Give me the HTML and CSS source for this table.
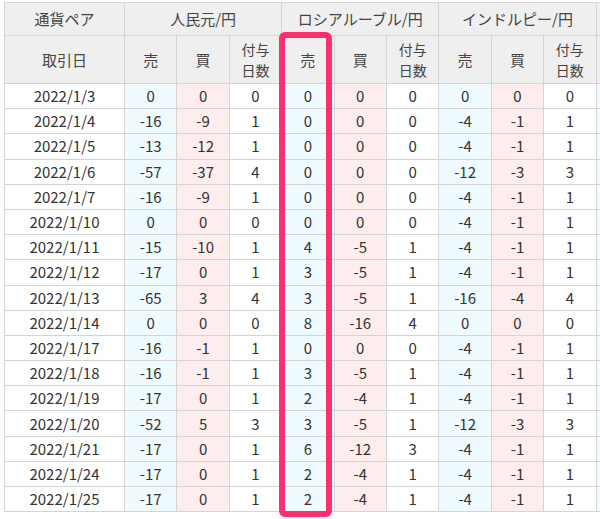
FILE: index.html
```html
<!DOCTYPE html>
<html lang="ja">
<head>
<meta charset="utf-8">
<title>通貨ペア</title>
<link rel="stylesheet" href="styles.css">
</head>
<body>
<div class="wrap">
  <table class="rates">
    <colgroup>
      <col class="c-date">
      <col class="c-num"><col class="c-num"><col class="c-num">
      <col class="c-num"><col class="c-num"><col class="c-num">
      <col class="c-num"><col class="c-num"><col class="c-num">
      <col class="c-num">
    </colgroup>
    <thead>
      <tr class="pair">
        <th>通貨ペア</th>
        <th colspan="3">人民元/円</th>
        <th colspan="3">ロシアルーブル/円</th>
        <th colspan="3">インドルピー/円</th>
        <th></th>
      </tr>
      <tr class="sub">
        <th>取引日</th>
        <th>売</th><th>買</th><th><span class="two">付与<br>日数</span></th>
        <th>売</th><th>買</th><th><span class="two">付与<br>日数</span></th>
        <th>売</th><th>買</th><th><span class="two">付与<br>日数</span></th>
        <th></th>
      </tr>
    </thead>
    <tbody id="rows"></tbody>
  </table>
  <div class="highlight"></div>
</div>
<script src="script.js"></script>
</body>
</html>
```

FILE: script.js
```js
const data = [
  ["2022/1/3", 0, 0, 0, 0, 0, 0, 0, 0, 0],
  ["2022/1/4", -16, -9, 1, 0, 0, 0, -4, -1, 1],
  ["2022/1/5", -13, -12, 1, 0, 0, 0, -4, -1, 1],
  ["2022/1/6", -57, -37, 4, 0, 0, 0, -12, -3, 3],
  ["2022/1/7", -16, -9, 1, 0, 0, 0, -4, -1, 1],
  ["2022/1/10", 0, 0, 0, 0, 0, 0, -4, -1, 1],
  ["2022/1/11", -15, -10, 1, 4, -5, 1, -4, -1, 1],
  ["2022/1/12", -17, 0, 1, 3, -5, 1, -4, -1, 1],
  ["2022/1/13", -65, 3, 4, 3, -5, 1, -16, -4, 4],
  ["2022/1/14", 0, 0, 0, 8, -16, 4, 0, 0, 0],
  ["2022/1/17", -16, -1, 1, 0, 0, 0, -4, -1, 1],
  ["2022/1/18", -16, -1, 1, 3, -5, 1, -4, -1, 1],
  ["2022/1/19", -17, 0, 1, 2, -4, 1, -4, -1, 1],
  ["2022/1/20", -52, 5, 3, 3, -5, 1, -12, -3, 3],
  ["2022/1/21", -17, 0, 1, 6, -12, 3, -4, -1, 1],
  ["2022/1/24", -17, 0, 1, 2, -4, 1, -4, -1, 1],
  ["2022/1/25", -17, 0, 1, 2, -4, 1, -4, -1, 1]
];
const kinds = ["sell", "buy", "days"];
const tbody = document.getElementById("rows");
data.forEach(r => {
  const tr = document.createElement("tr");
  const d = document.createElement("td");
  d.textContent = r[0];
  tr.appendChild(d);
  for (let i = 1; i < r.length; i++) {
    const td = document.createElement("td");
    td.className = kinds[(i - 1) % 3];
    td.textContent = r[i];
    tr.appendChild(td);
  }
  const extra = document.createElement("td");
  extra.className = "sell";
  tr.appendChild(extra);
  tbody.appendChild(tr);
});
```

FILE: styles.css
```css
html, body {
  margin: 0;
  padding: 0;
  background: #ffffff;
  overflow: hidden;
}
.wrap {
  position: relative;
  width: 600px;
  height: 519px;
  overflow: hidden;
  padding: 2px 0 0 4px;
  box-sizing: border-box;
}
.rates {
  border-collapse: collapse;
  table-layout: fixed;
  width: 644px;
  font-family: "Noto Sans CJK JP", "Noto Sans", sans-serif;
  font-size: 15px;
  color: #333333;
}
.c-date { width: 120px; }
.c-num { width: 52.4px; }
.rates th,
.rates td {
  border: 1px solid #d4d4d4;
  text-align: center;
  padding: 0;
  font-weight: normal;
  line-height: 18px;
}
.rates th {
  background: #efefef;
  color: #444444;
}
.two {
  display: inline-block;
  font-size: 14px;
  line-height: 20.5px;
}
.pair th { height: 32px; }
.sub th { height: 47px; }
.rates td { height: 24.2px; }
.rates td.sell { background: #effbff; }
.rates td.buy { background: #fdeded; }
.highlight {
  position: absolute;
  left: 279px;
  top: 32px;
  width: 53px;
  height: 485px;
  box-sizing: border-box;
  border: 6px solid #ff2e6e;
  border-radius: 6px;
}
```
